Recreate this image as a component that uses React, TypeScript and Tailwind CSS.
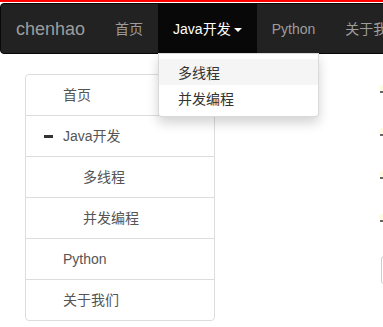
import { useState } from "react";

const font = "font-['Liberation_Sans','Noto_Sans_CJK_SC',sans-serif]";

const navItems = ["首页", "Java开发", "Python", "关于我们"];

const sideItems: { label: string; level: 0 | 1; open?: boolean }[] = [
  { label: "首页", level: 0 },
  { label: "Java开发", level: 0, open: true },
  { label: "多线程", level: 1 },
  { label: "并发编程", level: 1 },
  { label: "Python", level: 0 },
  { label: "关于我们", level: 0 },
];

function Navbar() {
  const [active] = useState("Java开发");
  return (
    <nav className="relative mt-[1px] flex h-[51px] w-[420px] items-stretch rounded-l-[4px] border border-[#080808] bg-[#222222]">
      <a className="flex items-center px-[15px] pt-[1px] text-[18px] text-[#9d9d9d]">chenhao</a>
      <ul className="flex">
        {navItems.map((it) => (
          <li
            key={it}
            className={
              it === active
                ? "relative flex items-center bg-[#080808] px-[15px] pt-[1px] text-[14px] text-white"
                : "flex items-center px-[15px] pt-[1px] text-[14px] text-[#9d9d9d]"
            }
          >
            {it}
            {it === active && (
              <>
                <span className="ml-[3px] mt-[2px] h-0 w-0 border-x-[4px] border-t-[4px] border-x-transparent border-t-white" />
                <div className="absolute left-0 top-full z-10 w-[161px] rounded-b-[4px] border border-[rgba(0,0,0,0.15)] bg-white py-[5px] shadow-[0_6px_12px_rgba(0,0,0,0.175)]">
                  <div className="bg-[#f5f5f5] px-[19px] pb-[2px] pt-[4px] leading-[20px] text-[#333]">多线程</div>
                  <div className="px-[19px] pb-[2px] pt-[4px] leading-[20px] text-[#333]">并发编程</div>
                </div>
              </>
            )}
          </li>
        ))}
      </ul>
    </nav>
  );
}

function Sidebar() {
  return (
    <ul className="w-[190px] rounded-[4px] border border-[#dddddd] bg-white">
      {sideItems.map((it, i) => (
        <li
          key={it.label}
          className={
            (i > 0 ? "h-[41px] border-t border-[#dddddd] " : "h-[40px] ") +
            (it.level === 1 ? "pl-[57px] " : "pl-[18px] ") +
            "flex items-center pt-[1px] text-[14px] text-[#555555]"
          }
        >
          {it.level === 0 && (
            <span className="flex w-[19px] items-center">
              {it.open && <span className="h-[3px] w-[9px] bg-[#333]" />}
            </span>
          )}
          {it.label}
        </li>
      ))}
    </ul>
  );
}

export default function App() {
  return (
    <div className={`${font} h-[327px] w-[383px] overflow-hidden bg-white`}>
      <div className="h-[2px] bg-[#ff0000]" />
      <Navbar />
      <div className="flex">
        <div className="ml-[25px] mt-[20px]">
          <Sidebar />
        </div>
        <div className="ml-[164px] mt-[31px] flex flex-col">
          {[0, 1, 2, 3].map((n) => (
            <div key={n} className="flex h-[43px] flex-col">
              <span className="h-[6px] w-[6px] rounded-full bg-[#fdfbe0]" />
              <span className="ml-[1px] h-[2px] w-[4px] bg-[#666]" />
            </div>
          ))}
          <div className="mt-[-1px] ml-[2px] h-[28px] w-[10px] rounded-l-[3px] border border-[#cccccc]" />
        </div>
      </div>
    </div>
  );
}
